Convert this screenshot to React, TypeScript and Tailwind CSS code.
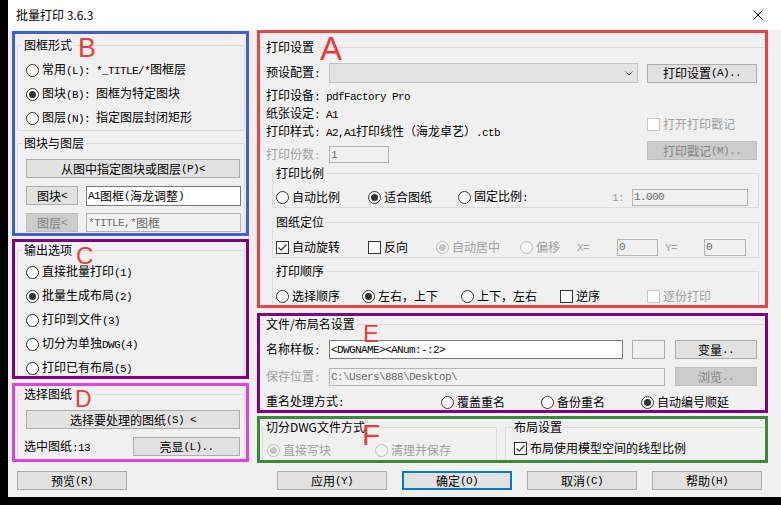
import React from "react";

function tx(s: string) {
  const parts = s.split(/([\x20-\x7E]+)/).filter((p) => p.length > 0);
  return parts.map((p, i) =>
    /^[\x20-\x7E]+$/.test(p) ? (
      <span key={i} className="font-['Liberation_Mono'] text-[11px] tracking-[-0.6px]">
        {p}
      </span>
    ) : (
      <span key={i}>{p}</span>
    )
  );
}

function T({ s, className = "" }: { s: string; className?: string }) {
  return <span className={"whitespace-pre shrink-0 " + className}>{tx(s)}</span>;
}

function Radio({
  label,
  checked = false,
  disabled = false,
  className = "",
}: {
  label: string;
  checked?: boolean;
  disabled?: boolean;
  className?: string;
}) {
  return (
    <div className={"flex items-center h-[16px] shrink-0 " + className}>
      <span
        className={
          disabled
            ? "w-[13px] h-[13px] rounded-full border border-[#bcbcbc] bg-[#f4f4f4] flex items-center justify-center shrink-0"
            : "w-[13px] h-[13px] rounded-full border border-[#333333] bg-white flex items-center justify-center shrink-0"
        }
      >
        {checked && (
          <span
            className={
              disabled
                ? "w-[7px] h-[7px] rounded-full bg-[#c4c4c4]"
                : "w-[7px] h-[7px] rounded-full bg-[#333333]"
            }
          />
        )}
      </span>
      <span className={disabled ? "ml-[3px] whitespace-pre text-[#a0a0a0]" : "ml-[3px] whitespace-pre"}>
        {tx(label)}
      </span>
    </div>
  );
}

function Check({
  label,
  checked = false,
  disabled = false,
  className = "",
}: {
  label: string;
  checked?: boolean;
  disabled?: boolean;
  className?: string;
}) {
  return (
    <div className={"flex items-center h-[16px] shrink-0 " + className}>
      <span
        className={
          disabled
            ? "w-[13px] h-[13px] border border-[#c8c8c8] bg-white flex items-center justify-center shrink-0"
            : "w-[13px] h-[13px] border border-[#333333] bg-white flex items-center justify-center shrink-0"
        }
      >
        {checked && (
          <svg width="11" height="11" viewBox="0 0 11 11">
            <path d="M1.5 5.5 L4.2 8.2 L9.5 2.5" fill="none" stroke="#333333" strokeWidth="1.2" />
          </svg>
        )}
      </span>
      <span className={disabled ? "ml-[3px] whitespace-pre text-[#a0a0a0]" : "ml-[3px] whitespace-pre"}>
        {tx(label)}
      </span>
    </div>
  );
}

function Btn({
  label,
  className = "",
  disabled = false,
  primary = false,
}: {
  label: string;
  className?: string;
  disabled?: boolean;
  primary?: boolean;
}) {
  const look = primary
    ? "bg-[#e1e1e1] border-2 border-[#0078d7]"
    : disabled
    ? "bg-[#cccccc] border border-[#bfbfbf] text-[#838383]"
    : "bg-[#e1e1e1] border border-[#adadad]";
  return (
    <div className={"h-[19px] flex items-center justify-center whitespace-pre shrink-0 " + look + " " + className}>
      {tx(label)}
    </div>
  );
}

function Input({
  value = "",
  className = "",
  disabled = false,
}: {
  value?: string;
  className?: string;
  disabled?: boolean;
}) {
  return (
    <div
      className={
        (disabled
          ? "bg-[#f0f0f0] border border-[#b4b4b4] text-[#6d6d6d]"
          : "bg-white border border-[#7a7a7a]") +
        " flex items-center px-[1px] whitespace-pre shrink-0 overflow-hidden " +
        className
      }
    >
      {tx(value)}
    </div>
  );
}

function Letter({ ch, className }: { ch: string; className: string }) {
  return (
    <span className={"absolute leading-none text-[#ea3d3d] font-['Liberation_Sans',sans-serif] " + className}>
      {ch}
    </span>
  );
}

export default function App() {
  return (
    <div className="w-[781px] h-[505px] bg-black pl-[8px] pb-[8px] text-[12px] leading-[16px] text-black font-['Noto_Sans_CJK_SC',sans-serif] overflow-hidden">
      <div className="w-[773px] h-[497px] bg-[#f0f0f0] flex flex-col">
        {/* Title bar */}
        <div className="h-[30px] bg-white flex items-center pl-[8px] pr-[18px] shrink-0">
          <span className="whitespace-pre">批量打印 3.6.3</span>
          <svg className="ml-auto" width="10" height="10" viewBox="0 0 10 10">
            <path d="M0.5 0.5 L9.5 9.5 M9.5 0.5 L0.5 9.5" stroke="#000000" strokeWidth="1" />
          </svg>
        </div>

        {/* Body */}
        <div className="flex pl-[4px] h-[433px] shrink-0">
          {/* Left column */}
          <div className="w-[237px] flex flex-col pt-[1px] shrink-0">
            {/* B */}
            <div className="relative h-[205px] border-[3px] border-[#4060d0] flex flex-col shrink-0">
              <fieldset className="ml-[2px] mt-[3px] w-[228px] border border-[#dcdcdc]">
                <legend className="ml-[4px] px-[2px]">图框形式</legend>
                <div className="pl-[8px] pt-[9px] pb-[4px] flex flex-col gap-[8px]">
                  <Radio label="常用(L): *_TITLE/*图框层" />
                  <Radio label="图块(B): 图框为特定图块" checked />
                  <Radio label="图层(N): 指定图层封闭矩形" />
                </div>
              </fieldset>
              <fieldset className="ml-[2px] mt-[4px] w-[228px] flex-1 border border-b-0 border-[#dcdcdc]">
                <legend className="ml-[4px] px-[2px]">图块与图层</legend>
                <div className="pl-[8px] pt-[8px] flex flex-col gap-[8px]">
                  <Btn label="从图中指定图块或图层(P)<" className="w-[214px]" />
                  <div className="flex h-[19px]">
                    <Btn label="图块<" className="w-[52px]" />
                    <Input value="A1图框(海龙调整)" className="ml-[8px] w-[155px] h-[20px]" />
                  </div>
                  <div className="flex h-[19px]">
                    <Btn label="图层<" disabled className="w-[52px]" />
                    <Input value="*TITLE,*图框" disabled className="ml-[8px] w-[155px] h-[19px]" />
                  </div>
                </div>
              </fieldset>
              <Letter ch="B" className="left-[63px] top-[1px] text-[27px]" />
            </div>

            {/* C */}
            <div className="relative mt-[3px] h-[140px] border-[3px] border-[#800080] flex flex-col shrink-0">
              <fieldset className="ml-[2px] w-[228px] flex-1 border border-b-0 border-[#dcdcdc]">
                <legend className="ml-[4px] px-[2px]">输出选项</legend>
                <div className="pl-[8px] pt-[6px] flex flex-col gap-[8px]">
                  <Radio label="直接批量打印(1)" />
                  <Radio label="批量生成布局(2)" checked />
                  <Radio label="打印到文件(3)" />
                  <Radio label="切分为单独DWG(4)" />
                  <Radio label="打印已有布局(5)" />
                </div>
              </fieldset>
              <Letter ch="C" className="left-[61px] top-[2px] text-[24px]" />
            </div>

            {/* D */}
            <div className="relative mt-[4px] h-[79px] border-[3px] border-[#e040e0] flex flex-col shrink-0">
              <fieldset className="ml-[2px] w-[228px] flex-1 border border-b-0 border-[#dcdcdc]">
                <legend className="ml-[4px] px-[2px]">选择图纸</legend>
                <div className="pt-[8px] flex flex-col gap-[8px]">
                  <div className="pl-[8px]">
                    <Btn label="选择要处理的图纸(S) <" className="w-[214px]" />
                  </div>
                  <div className="pl-[6px] pr-[4px] flex items-center h-[19px]">
                    <T s="选中图纸:13" />
                    <Btn label="亮显(L).." className="ml-auto w-[107px]" />
                  </div>
                </div>
              </fieldset>
              <Letter ch="D" className="left-[60px] top-[2px] text-[23px]" />
            </div>
          </div>

          {/* Right column */}
          <div className="w-[511px] ml-[8px] flex flex-col shrink-0">
            {/* A */}
            <div className="relative h-[278px] border-[3px] border-[#e84444] flex flex-col shrink-0">
              <fieldset className="mt-[6px] flex-1 border-t border-[#dcdcdc]">
                <legend className="ml-[4px] px-[2px]">打印设置</legend>
                <div className="pl-[6px] pt-[8px] flex flex-col">
                  <div className="flex items-center h-[20px]">
                    <T s="预设配置:" className="w-[63px]" />
                    <div className="w-[309px] h-[20px] bg-[#e3e3e3] border border-[#c3c3c3] flex items-center justify-end pr-[4px] shrink-0">
                      <svg width="8" height="5" viewBox="0 0 8 5">
                        <path d="M0.5 0.5 L4 4 L7.5 0.5" fill="none" stroke="#606060" strokeWidth="1" />
                      </svg>
                    </div>
                    <Btn label="打印设置(A).." className="ml-[9px] w-[110px]" />
                  </div>
                  <div className="flex mt-[4px]">
                    <div className="w-[372px] flex flex-col shrink-0">
                      <div className="h-[18px] flex items-center">
                        <T s="打印设备: pdfFactory Pro" />
                      </div>
                      <div className="h-[18px] flex items-center">
                        <T s="纸张设定: A1" />
                      </div>
                      <div className="h-[18px] flex items-center">
                        <T s="打印样式: A2,A1打印线性（海龙卓艺）.ctb" />
                      </div>
                      <div className="mt-[5px] h-[17px] flex items-center">
                        <T s="打印份数:" className="w-[63px] text-[#a0a0a0]" />
                        <Input value="1" disabled className="w-[60px] h-[17px]" />
                      </div>
                    </div>
                    <div className="ml-[9px] w-[110px] flex flex-col shrink-0">
                      <Check label="打开打印戳记" disabled className="mt-[29px]" />
                      <Btn label="打印戳记(M).." disabled className="mt-[9px] w-[110px]" />
                    </div>
                  </div>

                  <fieldset className="ml-[6px] mt-[2px] w-[487px] border border-[#dcdcdc]">
                    <legend className="ml-[1px] px-[2px]">打印比例</legend>
                    <div className="pl-[3px] pt-[7px] pb-[1px] h-[26px] flex items-center">
                      <Radio label="自动比例" className="w-[92px]" />
                      <Radio label="适合图纸" checked className="w-[90px]" />
                      <Radio label="固定比例:" className="w-[154px]" />
                      <T s="1:" className="w-[20px] text-[#a0a0a0]" />
                      <Input value="1.000" disabled className="w-[116px] h-[17px]" />
                    </div>
                  </fieldset>

                  <fieldset className="ml-[6px] mt-[6px] w-[487px] border border-[#dcdcdc]">
                    <legend className="ml-[1px] px-[2px]">图纸定位</legend>
                    <div className="pl-[3px] pt-[8px] pb-[1px] h-[27px] flex items-center">
                      <Check label="自动旋转" checked className="w-[92px]" />
                      <Check label="反向" className="w-[68px]" />
                      <Radio label="自动居中" checked disabled className="w-[84px]" />
                      <Radio label="偏移" disabled className="w-[57px]" />
                      <T s="X=" className="w-[40px] text-[#a0a0a0]" />
                      <Input value="0" disabled className="w-[41px] h-[17px]" />
                      <T s="Y=" className="ml-[7px] w-[39px] text-[#a0a0a0]" />
                      <Input value="0" disabled className="w-[42px] h-[17px]" />
                    </div>
                  </fieldset>

                  <fieldset className="ml-[6px] mt-[5px] w-[487px] border border-b-0 border-[#dcdcdc]">
                    <legend className="ml-[1px] px-[2px]">打印顺序</legend>
                    <div className="pl-[3px] pt-[9px] flex items-center">
                      <Radio label="选择顺序" className="w-[86px]" />
                      <Radio label="左右，上下" checked className="w-[99px]" />
                      <Radio label="上下，左右" className="w-[99px]" />
                      <Check label="逆序" className="w-[87px]" />
                      <Check label="逐份打印" disabled />
                    </div>
                  </fieldset>
                </div>
              </fieldset>
              <Letter ch="A" className="left-[60px] top-[-1px] text-[33px]" />
            </div>

            {/* E */}
            <div className="relative mt-[5px] h-[100px] border-[3px] border-[#800080] shrink-0">
              <fieldset className="border-t border-[#dcdcdc]">
                <legend className="ml-[4px] px-[2px]">文件/布局名设置</legend>
                <div className="pl-[6px] pt-[8px] flex flex-col">
                  <div className="flex items-center h-[19px]">
                    <T s="名称样板:" className="w-[63px]" />
                    <Input value="<DWGNAME><ANum:-:2>" className="w-[294px] h-[19px]" />
                    <div className="ml-[9px] w-[33px] h-[19px] bg-[#f0f0f0] border border-[#adadad] shrink-0" />
                    <Btn label="变量.." className="ml-[10px] w-[82px]" />
                  </div>
                  <div className="flex items-center h-[19px] mt-[8px]">
                    <T s="保存位置:" className="w-[63px] text-[#a0a0a0]" />
                    <Input value="C:\Users\888\Desktop\" disabled className="w-[336px] h-[18px]" />
                    <Btn label="浏览.." disabled className="ml-[10px] w-[82px]" />
                  </div>
                  <div className="flex items-center h-[16px] mt-[8px]">
                    <T s="重名处理方式:" className="w-[175px]" />
                    <Radio label="覆盖重名" className="w-[100px]" />
                    <Radio label="备份重名" className="w-[100px]" />
                    <Radio label="自动编号顺延" checked />
                  </div>
                </div>
              </fieldset>
              <Letter ch="E" className="left-[103px] top-[6px] text-[24px]" />
            </div>

            {/* F */}
            <div className="relative mt-[3px] h-[47px] border-[3px] border-[#3a8a3a] flex shrink-0">
              <fieldset className="ml-[2px] w-[235px] border border-b-0 border-[#dcdcdc]">
                <legend className="ml-[1px] px-[2px]">切分DWG文件方式</legend>
                <div className="pl-[4px] pt-[7px] flex">
                  <Radio label="直接写块" checked disabled className="w-[108px]" />
                  <Radio label="清理并保存" disabled />
                </div>
              </fieldset>
              <fieldset className="ml-[8px] flex-1 border border-b-0 border-r-0 border-[#dcdcdc]">
                <legend className="ml-[6px] px-[2px]">布局设置</legend>
                <div className="pl-[8px] pt-[5px]">
                  <Check label="布局使用模型空间的线型比例" checked />
                </div>
              </fieldset>
              <Letter ch="F" className="left-[102px] top-[1px] text-[30px]" />
            </div>
          </div>
        </div>

        {/* Bottom buttons */}
        <div className="flex mt-[8px] pl-[9px] shrink-0">
          <Btn label="预览(R)" className="w-[110px]" />
          <Btn label="应用(Y)" className="ml-[150px] w-[110px]" />
          <Btn label="确定(O)" primary className="ml-[15px] w-[110px]" />
          <Btn label="取消(C)" className="ml-[15px] w-[110px]" />
          <Btn label="帮助(H)" className="ml-[15px] w-[110px]" />
        </div>
      </div>
    </div>
  );
}
